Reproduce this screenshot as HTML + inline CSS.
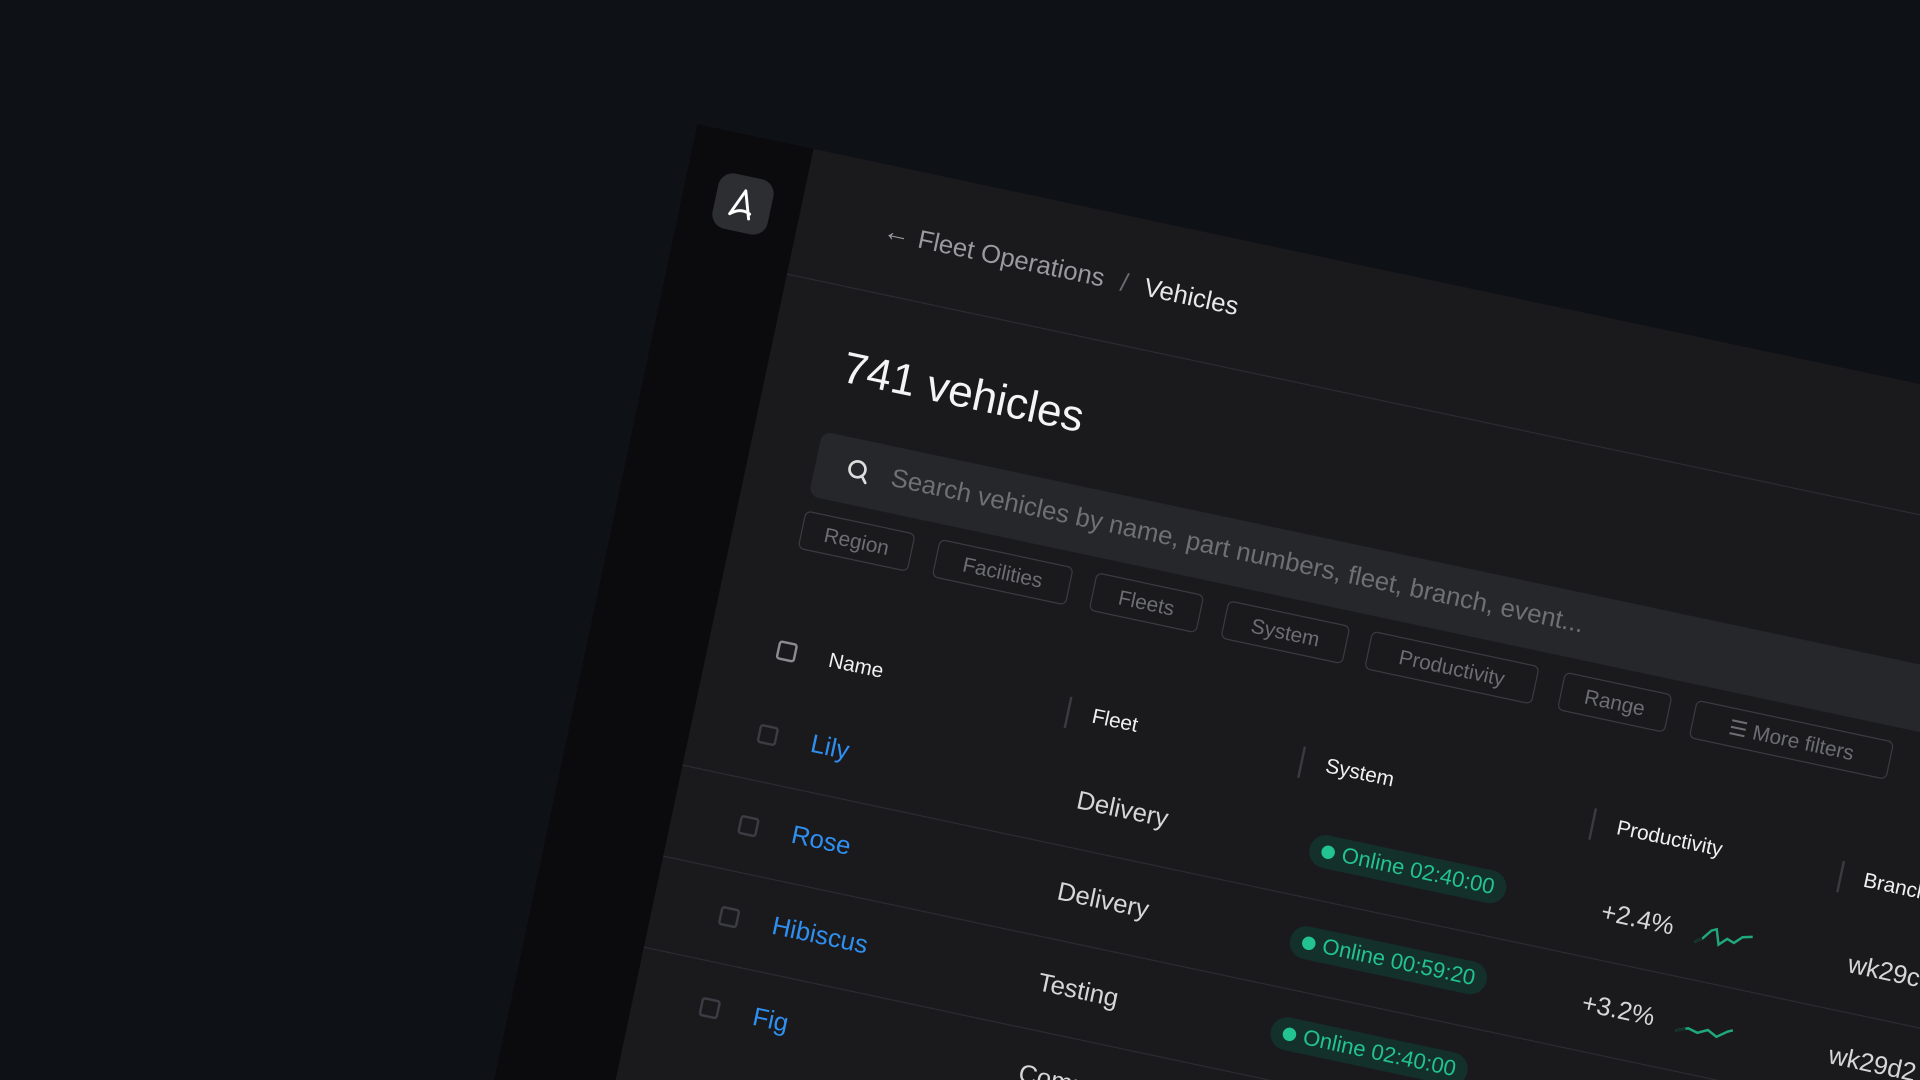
<!DOCTYPE html>
<html><head><style>
html,body{margin:0;width:1920px;height:1080px;overflow:hidden;background:#0e1116;font-family:"Liberation Sans",sans-serif}
#clip{position:absolute;left:0;top:0;width:1920px;height:1080px;overflow:hidden}
#w{position:absolute;left:0;top:0;transform-origin:0 0;transform:translate(743px,204px) scale(1.2245) rotate(12deg)}
#w div,#w span{position:absolute;white-space:nowrap}
.sb{left:-50px;top:-56px;width:97px;height:900px;background:#0b0b0d}
.ct{left:47px;top:-56px;width:1700px;height:900px;background:#1a1a1d}
.logo{left:-23px;top:-23px;width:46px;height:46px;border-radius:12px;background:#2d2e32}
.chip{height:32px;line-height:32px;border:1.5px solid #3a3b40;border-radius:5px;color:#6d6e74;font-size:17px;text-align:center;box-sizing:border-box}
.hd{color:#f0f0f0;font-size:17px}
.sep{width:2px;height:26px;background:#3a3b40}
.cb{width:16px;height:16px;border:2px solid #3c3d42;border-radius:3px;box-sizing:border-box}
.nm{color:#2f8ff0;font-size:21px}
.tx{color:#d6d6d8;font-size:21px}
.pill{height:27px;line-height:27px;border-radius:14px;background:#14302a;color:#22c38e;font-size:18px;padding:0 10px 0 27px}
.pill:before{content:"";position:absolute;left:10px;top:8px;width:11px;height:11px;border-radius:6px;background:#22c38e}
.line{height:1px;background:#2b2c31;width:1700px;left:47px}
</style></head><body>
<div id="clip">
<div id="w">
<div class="sb"></div>
<div class="ct"></div>
<div class="logo"><svg width="46" height="46" viewBox="0 0 46 46"><path d="M14 33 L23 12 L30 34 M14 33 Q22 26 30 30" fill="none" stroke="#fff" stroke-width="2.4" stroke-linecap="round" stroke-linejoin="round"/></svg></div>
<div style="left:117px;top:-16px;color:#9a9a9e;font-size:22px">←</div>
<div style="left:146px;top:-13px;color:#9a9a9e;font-size:21px">Fleet Operations <span style="position:static;margin:0 8px;color:#6a6a6e">/</span> <span style="position:static;color:#e8e8ea">Vehicles</span></div>
<div class="line" style="top:48px"></div>
<div style="left:108px;top:92px;color:#f4f4f5;font-size:36px">741 vehicles</div>
<div style="left:102px;top:168px;width:1650px;height:54px;border-radius:8px;background:#26272b"></div>
<svg style="position:absolute;left:126px;top:182px" width="24" height="24" viewBox="0 0 24 24"><circle cx="10.5" cy="10.5" r="6.5" fill="none" stroke="#ddd" stroke-width="2.2"/><path d="M15 15 L19 20" stroke="#ddd" stroke-width="2.2" stroke-linecap="round"/></svg>
<div style="left:165px;top:182px;color:#6f7076;font-size:21px">Search vehicles by name, part numbers, fleet, branch, event...</div>
<div class="chip" style="left:102px;top:234px;width:92px">Region</div>
<div class="chip" style="left:214px;top:234px;width:112px">Facilities</div>
<div class="chip" style="left:345px;top:234px;width:90px">Fleets</div>
<div class="chip" style="left:455px;top:234px;width:102px">System</div>
<div class="chip" style="left:575px;top:234px;width:140px">Productivity</div>
<div class="chip" style="left:736px;top:234px;width:90px">Range</div>
<div class="chip" style="left:846px;top:234px;width:165px">☰ More filters</div>
<div class="cb" style="left:103px;top:342px;border-color:#8a8a8f"></div>
<div class="hd" style="left:146px;top:340px">Name</div>
<div class="sep" style="left:345px;top:338px"></div><div class="hd" style="left:366px;top:340px">Fleet</div>
<div class="sep" style="left:540px;top:338px"></div><div class="hd" style="left:561px;top:340px">System</div>
<div class="sep" style="left:783px;top:338px"></div><div class="hd" style="left:804px;top:340px">Productivity</div>
<div class="sep" style="left:990px;top:338px"></div><div class="hd" style="left:1010px;top:340px">Branch</div>

<div class="cb" style="left:102px;top:412px"></div><div class="nm" style="left:146px;top:408px">Lily</div><div class="tx" style="left:368px;top:408px">Delivery</div><div class="pill" style="left:562px;top:405px">Online 02:40:00</div><div class="tx" style="left:806px;top:408px">+2.4%</div>
<svg style="position:absolute;left:885px;top:408px" width="56" height="24"><path d="M0 20 L6 16 L12 8 L16 6 L20 18 L26 12 L32 14 L38 8 L46 6" fill="none" stroke="#1fa97a" stroke-width="2"/><path d="M0 20 L6 16" stroke="#14302a" stroke-width="2"/></svg>
<div class="tx" style="left:1012px;top:408px">wk29c</div>
<div class="line" style="top:458px"></div>
<div class="cb" style="left:102px;top:488px"></div><div class="nm" style="left:146px;top:484px">Rose</div><div class="tx" style="left:368px;top:484px">Delivery</div><div class="pill" style="left:562px;top:481px">Online 00:59:20</div><div class="tx" style="left:806px;top:484px">+3.2%</div>
<svg style="position:absolute;left:885px;top:486px" width="56" height="22"><path d="M0 16 L10 12 L18 14 L26 10 L34 14 L42 8 L46 6" fill="none" stroke="#1fa97a" stroke-width="2"/><path d="M0 16 L8 13" stroke="#14302a" stroke-width="2"/></svg>
<div class="tx" style="left:1012px;top:484px">wk29d2</div>
<div class="line" style="top:534px"></div>
<div class="cb" style="left:102px;top:564px"></div><div class="nm" style="left:146px;top:560px">Hibiscus</div><div class="tx" style="left:368px;top:560px">Testing</div><div class="pill" style="left:562px;top:557px">Online 02:40:00</div>
<div class="line" style="top:610px"></div>
<div class="cb" style="left:102px;top:640px"></div><div class="nm" style="left:146px;top:636px">Fig</div><div class="tx" style="left:368px;top:636px">Commute</div><div class="pill" style="left:562px;top:633px">Online 02:40:00</div>
</div>
</div>
</body></html>
